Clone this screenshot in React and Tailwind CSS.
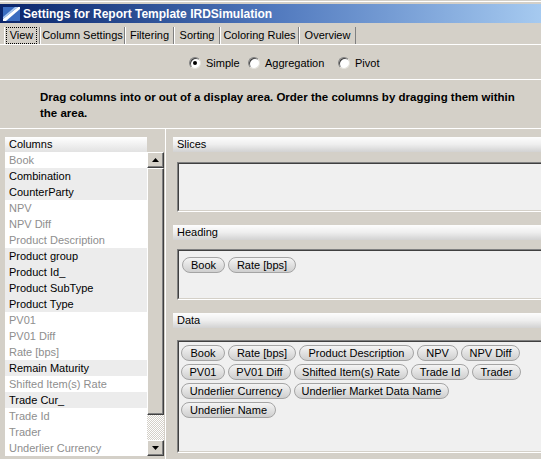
import React from 'react';

const columns = [
  { name: 'Book', on: false },
  { name: 'Combination', on: true },
  { name: 'CounterParty', on: true },
  { name: 'NPV', on: false },
  { name: 'NPV Diff', on: false },
  { name: 'Product Description', on: false },
  { name: 'Product group', on: true },
  { name: 'Product Id_', on: true },
  { name: 'Product SubType', on: true },
  { name: 'Product Type', on: true },
  { name: 'PV01', on: false },
  { name: 'PV01 Diff', on: false },
  { name: 'Rate [bps]', on: false },
  { name: 'Remain Maturity', on: true },
  { name: 'Shifted Item(s) Rate', on: false },
  { name: 'Trade Cur_', on: true },
  { name: 'Trade Id', on: false },
  { name: 'Trader', on: false },
  { name: 'Underlier Currency', on: false },
];

const tabs = [
  { label: 'Column Settings', w: 'w-[85px]' },
  { label: 'Filtering', w: 'w-[49px]' },
  { label: 'Sorting', w: 'w-[46px]' },
  { label: 'Coloring Rules', w: 'w-[79px]' },
  { label: 'Overview', w: 'w-[57px]' },
];

const headingChips = [[
  { label: 'Book', w: 'w-[43px]' },
  { label: 'Rate [bps]', w: 'w-[68px]' },
]];

const dataChips = [
  [
    { label: 'Book', w: 'w-[44px]' },
    { label: 'Rate [bps]', w: 'w-[68px]' },
    { label: 'Product Description', w: 'w-[115px]' },
    { label: 'NPV', w: 'w-[41px]' },
    { label: 'NPV Diff', w: 'w-[59px]' },
  ],
  [
    { label: 'PV01', w: 'w-[44px]' },
    { label: 'PV01 Diff', w: 'w-[63px]' },
    { label: 'Shifted Item(s) Rate', w: 'w-[114px]' },
    { label: 'Trade Id', w: 'w-[58px]' },
    { label: 'Trader', w: 'w-[49px]' },
  ],
  [
    { label: 'Underlier Currency', w: 'w-[110px]' },
    { label: 'Underlier Market Data Name', w: 'w-[155px]' },
  ],
  [{ label: 'Underlier Name', w: 'w-[95px]' }],
];

function Radio({ label, checked, w }) {
  return (
    <div className={`flex items-center gap-[5px] ${w}`}>
      <span className="w-[12px] h-[12px] rounded-full bg-white border border-t-[#808080] border-l-[#808080] border-r-[#e4e2dc] border-b-[#e4e2dc] shadow-[inset_1px_1px_0_#404040] flex items-center justify-center">
        {checked && <span className="w-[4px] h-[4px] rounded-full bg-black" />}
      </span>
      <span>{label}</span>
    </div>
  );
}

function SectionHeader({ children }) {
  return (
    <div className="h-[15px] flex items-center pl-[4px] bg-linear-to-b from-[#fdfdfd] via-[#eeeeee] to-[#d2d2d2]">
      {children}
    </div>
  );
}

function Chips({ rows }) {
  return (
    <div className="flex flex-col gap-[3px]">
      {rows.map((row, i) => (
        <div key={i} className="flex gap-[3px]">
          {row.map((c) => (
            <div
              key={c.label}
              className={`${c.w} h-[16px] shrink-0 flex items-center justify-center rounded-full border border-[#a4a4a4] bg-linear-to-b from-[#f4f4f4] to-[#cfcfcf] text-black`}
            >
              {c.label}
            </div>
          ))}
        </div>
      ))}
    </div>
  );
}

function DropBox({ className, children }) {
  return (
    <div className={`ml-[4px] border border-t-[#808080] border-l-[#808080] border-r-white border-b-white ${className}`}>
      <div className="h-full border border-t-[#404040] border-l-[#404040] border-r-[#d4d0c8] border-b-[#d4d0c8] bg-[#f0f0f0]">
        {children}
      </div>
    </div>
  );
}

function ScrollButton({ down }) {
  return (
    <div className="h-[16px] shrink-0 bg-[#d4d0c8] border border-t-white border-l-white border-r-[#404040] border-b-[#404040] shadow-[inset_-1px_-1px_0_#808080] flex items-center justify-center">
      <svg width="7" height="4" viewBox="0 0 7 4">
        {down ? <polygon points="0,0 7,0 3.5,4" fill="#000" /> : <polygon points="0,4 7,4 3.5,0" fill="#000" />}
      </svg>
    </div>
  );
}

export default function App() {
  return (
    <div className="w-[541px] h-[459px] overflow-hidden bg-[#d4d0c8] font-['Liberation_Sans',Arial,sans-serif] text-[11px] text-black flex flex-col">
      {/* window top edge */}
      <div className="h-[4px] shrink-0 pt-[1px]">
        <div className="h-px bg-white" />
      </div>

      {/* Title bar */}
      <div className="h-[19px] shrink-0 flex items-center pl-[3px] bg-linear-to-r from-[#0a246a] via-[#5078bd] to-[#a6caf0]">
        <svg width="17" height="14" viewBox="0 0 17 14">
          <rect x="0" y="0" width="17" height="14" fill="#3a6cc0" />
          <polygon points="0,14 3,14 17,2 17,0 15,0 0,12" fill="#ffffff" />
          <polygon points="0,10 12,0 15,0 0,12" fill="#a9c8f0" />
        </svg>
        <span className="ml-[3px] text-white font-bold text-[12px] leading-none">
          Settings for Report Template IRDSimulation
        </span>
      </div>

      {/* Tabs */}
      <div className="h-[22px] shrink-0 flex items-end pl-[4px] border-b border-white">
        <div className="w-[36px] h-[17px] border-l border-white border-r border-r-[#808080] pl-[1px]">
          <span className="w-[31px] h-[17px] border border-dotted border-black flex items-center justify-center">View</span>
        </div>
        {tabs.map((t) => (
          <div key={t.label} className={`${t.w} h-[17px] border-l border-white border-r border-r-[#808080] flex items-center justify-center`}>
            {t.label}
          </div>
        ))}
      </div>

      {/* Radio row */}
      <div className="h-[34px] shrink-0 flex items-start pt-[10px] pl-[189px]">
        <Radio label="Simple" checked w="w-[59px]" />
        <Radio label="Aggregation" w="w-[90px]" />
        <Radio label="Pivot" />
      </div>
      <div className="h-px shrink-0 bg-white" />

      {/* Instruction */}
      <div className="h-[48px] shrink-0 pl-[40px] pt-[9px] font-bold text-[11.5px] leading-[16px]">
        Drag columns into or out of a display area. Order the columns by dragging them within
        <br />
        the area.
      </div>
      <div className="h-px shrink-0 bg-white" />

      {/* Main */}
      <div className="flex-1 flex min-h-0">
        {/* Columns list */}
        <div className="w-[164px] shrink-0 pl-[5px] pt-[8px] flex flex-col">
          <div className="w-[142px] h-[15px] flex items-center pl-[4px] bg-linear-to-b from-[#ffffff] to-[#e2e2e2]">
            Columns
          </div>
          <div className="flex">
            <div className="w-[142px] flex flex-col">
              {columns.map((c) => (
                <div
                  key={c.name}
                  className={`h-[16px] flex items-center pl-[4px] ${c.on ? 'bg-[#ececec] text-black' : 'bg-white text-[#8e8e8e]'}`}
                >
                  {c.name}
                </div>
              ))}
            </div>
            <div className="w-[17px] h-[304px] flex flex-col">
              <ScrollButton />
              <div className="h-[247px] shrink-0 bg-[#d4d0c8] border border-t-white border-l-white border-r-[#404040] border-b-[#404040] shadow-[inset_-1px_-1px_0_#808080]" />
              <div className="flex-1 bg-[repeating-conic-gradient(#d4d0c8_0_25%,#ffffff_0_50%)] bg-[length:2px_2px]" />
              <ScrollButton down />
            </div>
          </div>
        </div>

        {/* Splitter */}
        <div className="w-[9px] shrink-0 pl-px">
          <div className="w-px h-full bg-white" />
        </div>

        {/* Display areas */}
        <div className="w-[380px] shrink-0 pt-[8px] flex flex-col">
          <SectionHeader>Slices</SectionHeader>
          <DropBox className="mt-[10px] h-[50px]" />

          <div className="mt-[13px]">
            <SectionHeader>Heading</SectionHeader>
          </div>
          <DropBox className="mt-[9px] h-[51px]">
            <div className="pl-[3px] pt-[6px]">
              <Chips rows={headingChips} />
            </div>
          </DropBox>

          <div className="mt-[13px]">
            <SectionHeader>Data</SectionHeader>
          </div>
          <DropBox className="mt-[12px] h-[113px]">
            <div className="pl-[2px] pt-[3px]">
              <Chips rows={dataChips} />
            </div>
          </DropBox>
        </div>
      </div>
    </div>
  );
}
